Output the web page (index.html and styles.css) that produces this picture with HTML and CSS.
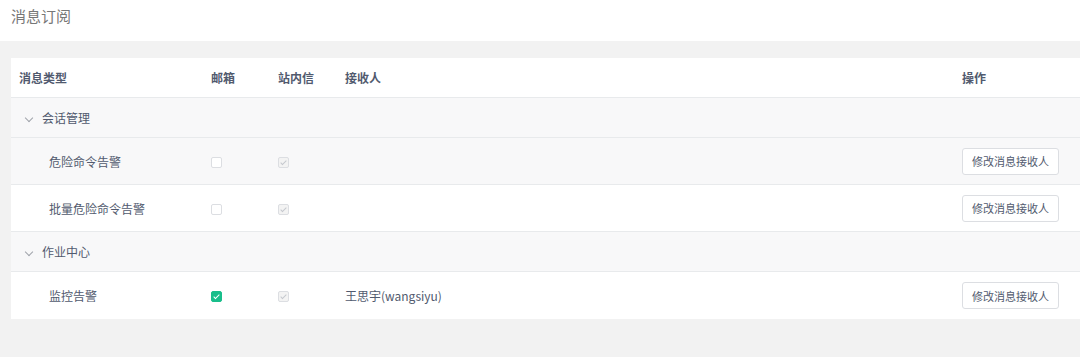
FILE: index.html
```html
<!DOCTYPE html>
<html lang="zh">
<head>
    <meta charset="UTF-8">
    <meta name="viewport" content="width=device-width, initial-scale=1.0">
    <title>消息订阅</title>
    <link rel="stylesheet" href="styles.css">
</head>
<body>

    <div class="page-header">消息订阅</div>

    <div class="content">
        <table class="sub-table">
            <colgroup>
                <col class="col-type">
                <col class="col-mail">
                <col class="col-site">
                <col class="col-recv">
                <col class="col-op">
            </colgroup>
            <thead>
                <tr>
                    <th>消息类型</th>
                    <th>邮箱</th>
                    <th>站内信</th>
                    <th>接收人</th>
                    <th>操作</th>
                </tr>
            </thead>
            <tbody>
                <tr class="group-row">
                    <td colspan="5"><span class="arrow"></span>会话管理</td>
                </tr>
                <tr class="item-row hover">
                    <td class="item-name">危险命令告警</td>
                    <td><span class="checkbox"></span></td>
                    <td><span class="checkbox disabled checked"></span></td>
                    <td></td>
                    <td><button class="btn">修改消息接收人</button></td>
                </tr>
                <tr class="item-row">
                    <td class="item-name">批量危险命令告警</td>
                    <td><span class="checkbox"></span></td>
                    <td><span class="checkbox disabled checked"></span></td>
                    <td></td>
                    <td><button class="btn">修改消息接收人</button></td>
                </tr>
                <tr class="group-row">
                    <td colspan="5"><span class="arrow"></span>作业中心</td>
                </tr>
                <tr class="item-row last">
                    <td class="item-name">监控告警</td>
                    <td><span class="checkbox checked"></span></td>
                    <td><span class="checkbox disabled checked"></span></td>
                    <td>王思宇(wangsiyu)</td>
                    <td><button class="btn">修改消息接收人</button></td>
                </tr>
            </tbody>
        </table>
    </div>

</body>
</html>
```

FILE: styles.css
```css
body {
    margin: 0;
    background: #f2f2f2;
    font-family: "Noto Sans CJK SC", "Noto Sans", sans-serif;
    font-size: 12px;
    color: #515a6e;
}
.page-header {
    height: 41px;
    line-height: 32px;
    background: #fff;
    padding-left: 11px;
    font-size: 15px;
    color: #777;
}
.content {
    padding: 17px 0 0 11px;
}
.sub-table {
    width: 100%;
    border-collapse: collapse;
    table-layout: fixed;
    background: #fff;
}
.col-type { width: 192px; }
.col-mail { width: 67px; }
.col-site { width: 67px; }
.col-recv { width: 617px; }
th, td {
    padding: 0 8px;
    text-align: left;
    border-bottom: 1px solid #e8eaec;
}
th {
    height: 39px;
    font-weight: bold;
    color: #515a6e;
}
.group-row td {
    height: 39px;
    background: #f8f8f9;
    padding-left: 13px;
}
.item-row td {
    height: 46px;
}
.item-row.last td {
    height: 47px;
    border-bottom: none;
}
.item-row.hover td {
    background: #f8f8f9;
}
.item-name {
    padding-left: 38px !important;
}
.arrow {
    display: inline-block;
    width: 5px;
    height: 5px;
    border-right: 1px solid #a0a4ab;
    border-bottom: 1px solid #a0a4ab;
    transform: rotate(45deg);
    margin: 0 10px 3px 2px;
    vertical-align: middle;
}
.checkbox {
    display: inline-block;
    position: relative;
    width: 9px;
    height: 9px;
    border: 1px solid #dcdee2;
    border-radius: 2px;
    background: #fff;
    vertical-align: middle;
    margin-top: -2px;
}
.checkbox.checked::after {
    content: "";
    position: absolute;
    left: 3px;
    top: 1px;
    width: 2px;
    height: 5px;
    border-right: 1px solid #fff;
    border-bottom: 1px solid #fff;
    transform: rotate(45deg);
}
.checkbox.checked {
    background: #19be8b;
    border-color: #19be8b;
}
.checkbox.disabled {
    background: #f3f3f3;
    border-color: #dcdee2;
}
.checkbox.disabled.checked::after {
    border-color: #c5c8ce;
}
.btn {
    width: 97px;
    height: 27px;
    background: #fff;
    border: 1px solid #dcdee2;
    border-radius: 3px;
    font-family: inherit;
    font-size: 11px;
    color: #515a6e;
    padding: 0;
    cursor: pointer;
}
```
